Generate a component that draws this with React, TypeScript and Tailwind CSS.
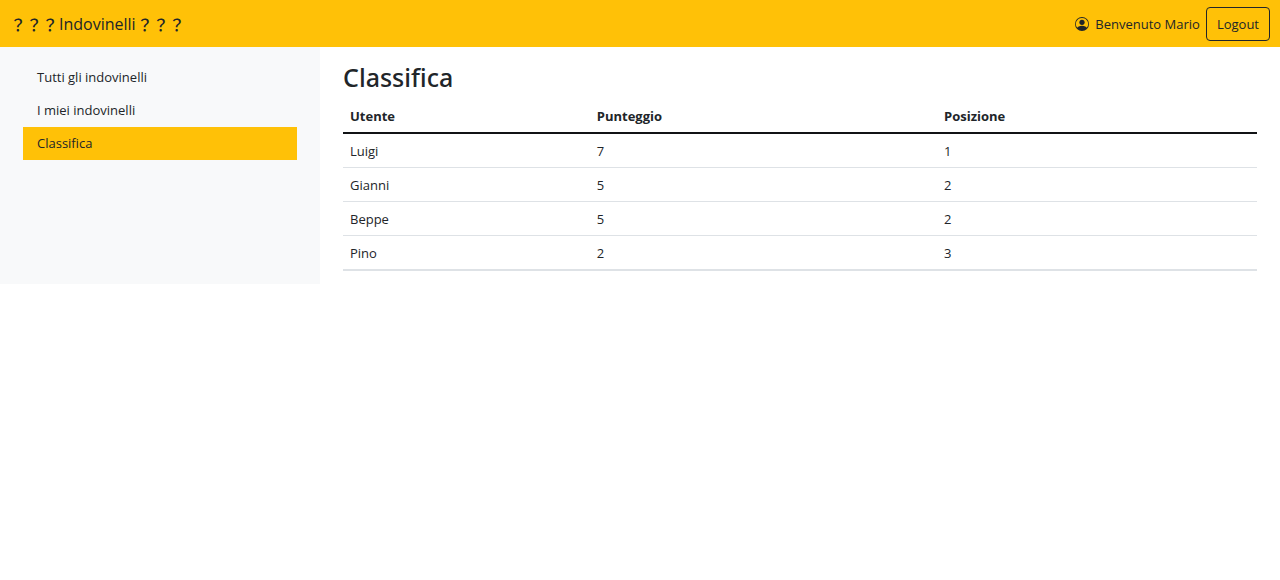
import { BsPersonCircle } from "react-icons/bs";

const links = ["Tutti gli indovinelli", "I miei indovinelli", "Classifica"];

const ranking = [
  { user: "Luigi", score: 7, position: 1 },
  { user: "Gianni", score: 5, position: 2 },
  { user: "Beppe", score: 5, position: 2 },
  { user: "Pino", score: 2, position: 3 },
];

function Marks() {
  return <span className="font-['Noto_Sans_CJK_JP',sans-serif] font-medium">？？？</span>;
}

function Header() {
  return (
    <header className="flex h-[47px] items-center justify-between bg-[#ffc107] px-[10px]">
      <a href="#" className="flex gap-px text-base leading-6 whitespace-nowrap">
        <Marks />
        <span>Indovinelli</span>
        <Marks />
      </a>
      <div className="flex items-center gap-[6px]">
        <BsPersonCircle className="size-[14px]" aria-hidden="true" />
        <span>Benvenuto Mario</span>
        <button type="button" className="h-[34px] rounded-[4px] border border-[#212529] px-[10px]">
          Logout
        </button>
      </div>
    </header>
  );
}

function Sidebar() {
  return (
    <nav className="w-1/4 bg-[#f8f9fa] px-[23px] py-[14px]">
      <ul>
        {links.map((label) => (
          <li key={label}>
            <a
              href="#"
              aria-current={label === "Classifica" ? "page" : undefined}
              className={
                label === "Classifica"
                  ? "block bg-[#ffc107] px-[14px] leading-[33px]"
                  : "block px-[14px] leading-[33px]"
              }
            >
              {label}
            </a>
          </li>
        ))}
      </ul>
    </nav>
  );
}

function Ranking() {
  return (
    <main className="w-3/4 px-[23px] pt-[14px] pb-[13px]">
      <h1 className="mb-[6px] font-['Noto_Sans',sans-serif] text-[25px] leading-8 font-medium">Classifica</h1>
      <table className="w-full table-fixed border-collapse text-left">
        <thead>
          <tr className="h-[34px] border-b-2 border-[#111315]">
            <th className="w-[27%] px-[7px] font-bold">Utente</th>
            <th className="w-[38%] px-[7px] font-bold">Punteggio</th>
            <th className="w-[35%] px-[7px] font-bold">Posizione</th>
          </tr>
        </thead>
        <tbody>
          {ranking.map((row) => (
            <tr key={row.user} className="h-[34px] border-b border-[#dee2e6] last:h-[35px] last:border-b-2">
              <td className="px-[7px] pt-[2px]">{row.user}</td>
              <td className="px-[7px] pt-[2px]">{row.score}</td>
              <td className="px-[7px] pt-[2px]">{row.position}</td>
            </tr>
          ))}
        </tbody>
      </table>
    </main>
  );
}

export default function App() {
  return (
    <div className="bg-white font-['Open_Sans','Noto_Sans',sans-serif] text-[13px] leading-5 text-[#212529]">
      <Header />
      <div className="flex">
        <Sidebar />
        <Ranking />
      </div>
    </div>
  );
}
